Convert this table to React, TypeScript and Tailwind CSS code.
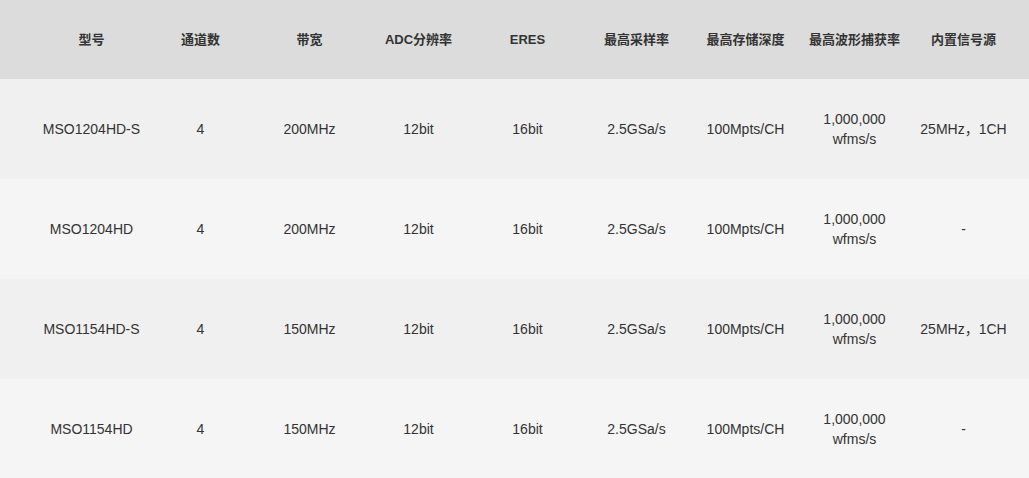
const headers = ["型号", "通道数", "带宽", "ADC分辨率", "ERES", "最高采样率", "最高存储深度", "最高波形捕获率", "内置信号源"];

const rows = [
  ["MSO1204HD-S", "4", "200MHz", "12bit", "16bit", "2.5GSa/s", "100Mpts/CH", "1,000,000\nwfms/s", "25MHz，1CH"],
  ["MSO1204HD", "4", "200MHz", "12bit", "16bit", "2.5GSa/s", "100Mpts/CH", "1,000,000\nwfms/s", "-"],
  ["MSO1154HD-S", "4", "150MHz", "12bit", "16bit", "2.5GSa/s", "100Mpts/CH", "1,000,000\nwfms/s", "25MHz，1CH"],
  ["MSO1154HD", "4", "150MHz", "12bit", "16bit", "2.5GSa/s", "100Mpts/CH", "1,000,000\nwfms/s", "-"],
];

const font = "font-['Arial','Liberation_Sans','Microsoft_YaHei','Noto_Sans_CJK_SC',sans-serif]";

export default function App() {
  return (
    <div className={`w-[1029px] h-[478px] overflow-hidden bg-white text-[14px] text-[#333] ${font}`}>
      <div className="grid grid-cols-[repeat(9,109px)] pl-[37px] h-[79px] bg-[#dcdcdc] items-center font-bold text-[13px]">
        {headers.map((h) => (
          <div key={h} className="text-center leading-5 whitespace-nowrap">{h}</div>
        ))}
      </div>
      {rows.map((r, i) => (
        <div
          key={i}
          className={`grid grid-cols-[repeat(9,109px)] pl-[37px] h-[100px] items-center ${i % 2 === 0 ? "bg-[#f0f0f0]" : "bg-[#f5f5f5]"}`}
        >
          {r.map((c, j) => (
            <div key={j} className="text-center leading-5 whitespace-pre-line">{c}</div>
          ))}
        </div>
      ))}
    </div>
  );
}
